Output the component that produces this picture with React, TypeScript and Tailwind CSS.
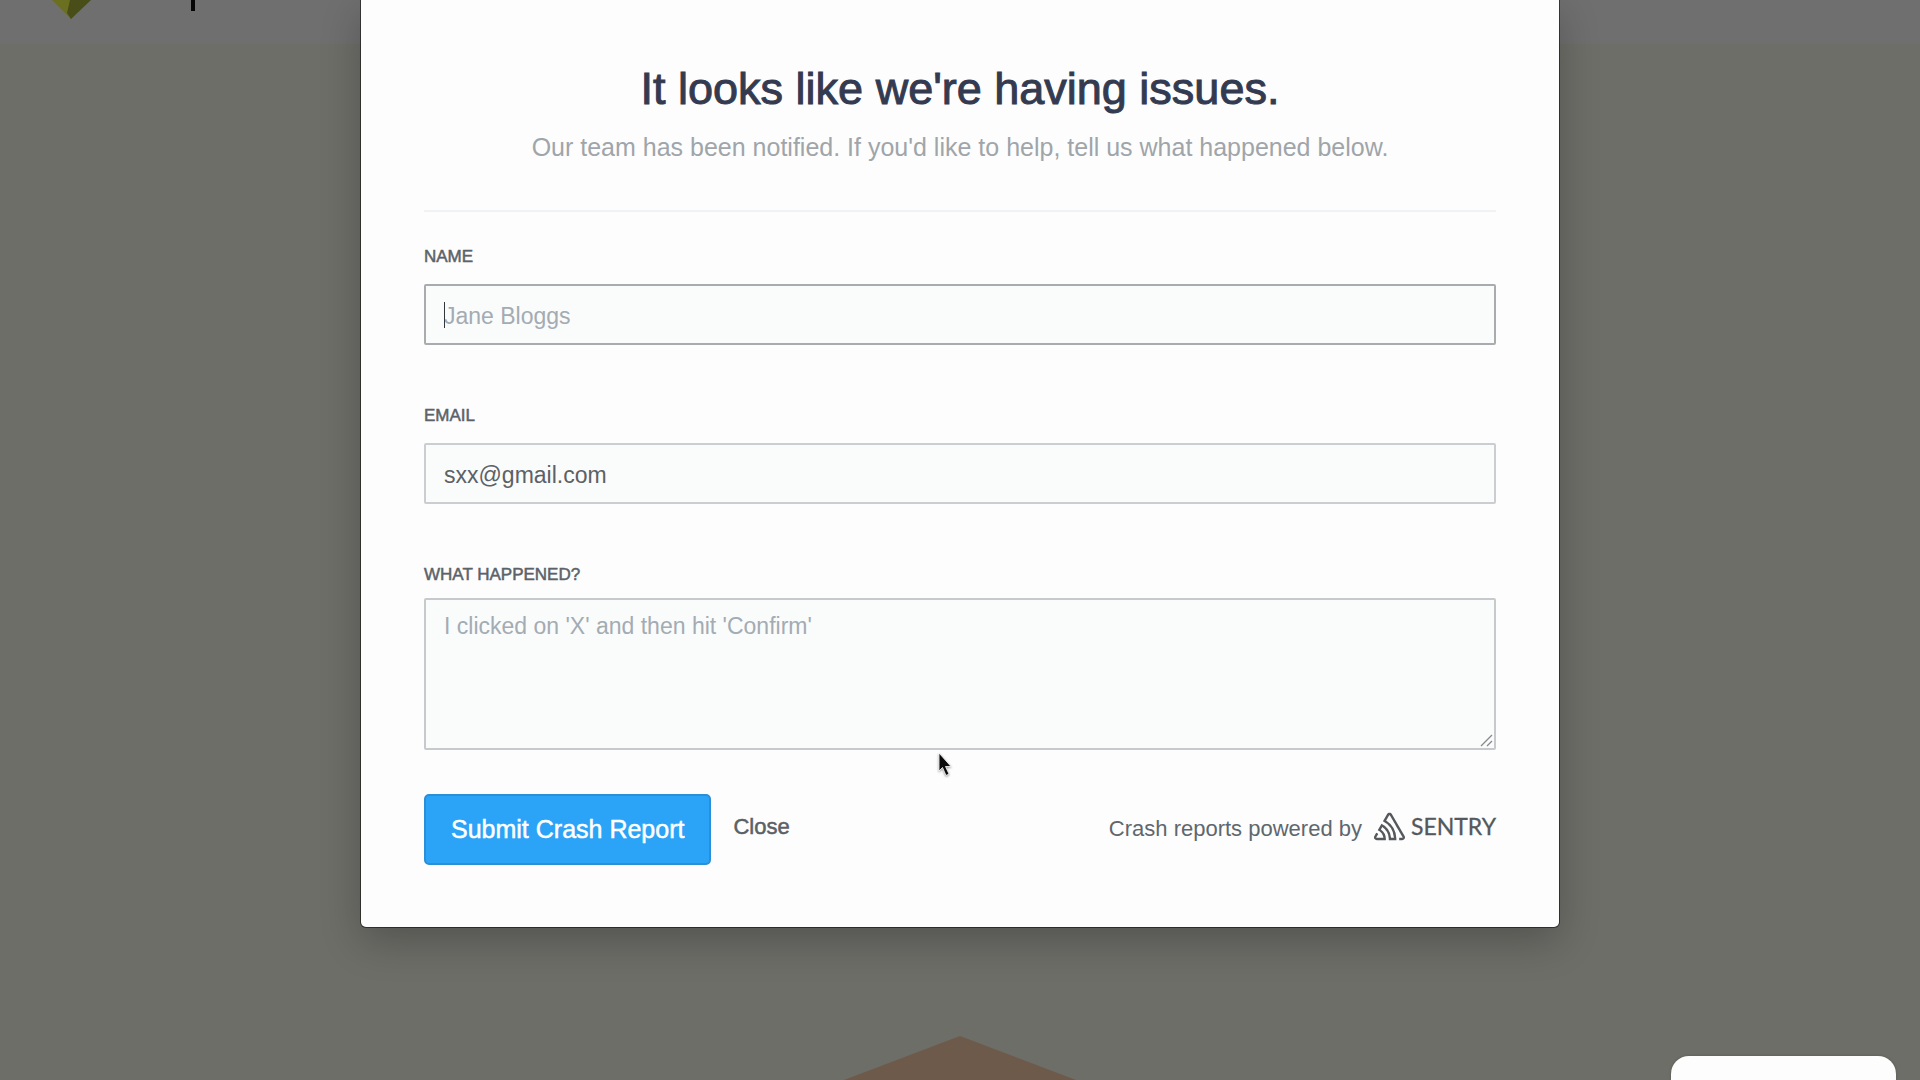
import type { ReactNode } from "react";
import { SiSentry } from "react-icons/si";

const control =
  "block w-full rounded-[2px] border-2 bg-[#fafbfb] px-[18px] text-[23px] text-[#5c6166] placeholder:text-[#a3abb3] placeholder:opacity-100 focus:outline-none";

function Field({ id, label, children }: { id: string; label: string; children: ReactNode }) {
  return (
    <div>
      <label
        htmlFor={id}
        className="block text-[17px] leading-6 uppercase text-[#5b6269] [-webkit-text-stroke:0.5px]"
      >
        {label}
      </label>
      {children}
    </div>
  );
}

function Backdrop() {
  return (
    <div className="flex min-h-screen flex-col bg-[#6d6e68]">
      <header className="h-11 bg-[#6f6f6f]">
        <svg width="240" height="24" viewBox="0 0 240 24" aria-hidden="true">
          <path d="M52 0h20l-1 19z" fill="#6a7020" />
          <path d="M70 0h21L71 19l-4-6z" fill="#494d18" />
          <path d="M191 0h4v11h-4z" fill="#050505" />
        </svg>
      </header>
      <main className="flex flex-1 items-end justify-center">
        <svg width="232" height="44" viewBox="0 0 232 44" aria-hidden="true">
          <path d="M116 0l116 44H0z" fill="#6e5a4b" />
        </svg>
      </main>
    </div>
  );
}

function CrashReport() {
  return (
    <div
      role="dialog"
      aria-labelledby="crash-title"
      className="relative w-full max-w-[1198px] rounded-b-[5px] bg-[#fdfdfd] px-[63px] pt-[63px] pb-[62px] shadow-[0_0_0_1px_rgba(0,0,0,0.5),0_14px_40px_rgba(0,0,0,0.24)]"
    >
      <header className="border-b-2 border-[#f1f2f3] pb-[47px] text-center">
        <h1
          id="crash-title"
          className="text-[45px] leading-[52px] text-[#343a50] [-webkit-text-stroke:1px]"
        >
          It looks like we're having issues.
        </h1>
        <p className="mt-4 text-[25px] leading-8 text-[#9fa5aa]">
          Our team has been notified. If you'd like to help, tell us what happened below.
        </p>
      </header>

      <form className="mt-[33px]">
        <div className="space-y-[59px]">
          <Field id="name" label="Name">
            <div className="relative mt-[15px]">
              <input
                id="name"
                type="text"
                placeholder="Jane Bloggs"
                className={`${control} h-[61px] border-[#a9acaf] pt-[3px]`}
              />
              <span className="absolute top-[18px] left-5 h-[26px] w-px bg-[#33373b]" />
            </div>
          </Field>
          <Field id="email" label="Email">
            <input
              id="email"
              type="email"
              defaultValue="sxx@gmail.com"
              className={`${control} mt-[15px] h-[61px] border-[#cbced0] pt-[3px]`}
            />
          </Field>
          <Field id="comments" label="What happened?">
            <div className="relative mt-[11px]">
              <textarea
                id="comments"
                placeholder="I clicked on 'X' and then hit 'Confirm'"
                className={`${control} h-[152px] resize-y border-[#c6cacc] py-[12px] leading-7`}
              />
              <svg
                width="16"
                height="16"
                viewBox="0 0 16 16"
                aria-hidden="true"
                className="pointer-events-none absolute right-[2px] bottom-[2px] bg-[#fafbfb]"
              >
                <path d="M3 14L14 3M9 14l5-5" stroke="#85898c" strokeWidth="1.300" />
              </svg>
            </div>
          </Field>
        </div>

        <div className="mt-11 flex items-start">
          <button
            type="submit"
            className="h-[71px] rounded-[5px] border-2 border-[#2b8fd8] bg-[#2ba3f7] px-[25px] text-[25px] text-white [-webkit-text-stroke:0.5px]"
          >
            Submit Crash Report
          </button>
          <button
            type="button"
            className="ml-[22px] h-16 text-[22px] text-[#5b6066] [-webkit-text-stroke:0.5px]"
          >
            Close
          </button>
          <p className="ml-auto flex h-16 items-center text-[22px] text-[#5f676e]">
            <span className="pt-1">Crash reports powered by</span>
            <a
              href="https://sentry.io"
              className="ml-3 flex items-center gap-[6px] font-['Lato',sans-serif] text-[23px] text-[#55585c] [-webkit-text-stroke:0.3px]"
            >
              <SiSentry className="size-[31px]" />
              SENTRY
            </a>
          </p>
        </div>
      </form>
    </div>
  );
}

export default function App() {
  return (
    <div className="relative min-h-screen overflow-hidden font-['Liberation_Sans',Arial,sans-serif]">
      <Backdrop />
      <div className="absolute inset-0 flex items-start justify-center">
        <CrashReport />
      </div>
      <div className="absolute right-6 bottom-0 h-6 w-[225px] rounded-t-[18px] bg-[#fdfdfd] shadow-[0_0_3px_rgba(0,0,0,0.2)]" />
      <svg
        width="20"
        height="28"
        viewBox="0 0 20 28"
        aria-hidden="true"
        className="absolute top-[752px] left-[938px] drop-shadow-[0_1px_1px_rgba(0,0,0,0.4)]"
      >
        <path
          d="M1 1v18l3.500-3.500 3.500 8 3-1.500-3.500-7.500h5.500z"
          fill="#0a0a0a"
          stroke="#fff"
          strokeWidth="0.800"
        />
      </svg>
    </div>
  );
}
